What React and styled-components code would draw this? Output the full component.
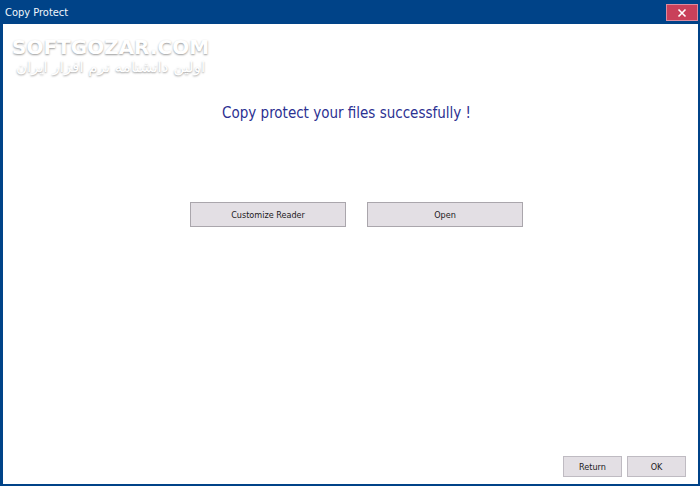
import React from "react";
import styled, { createGlobalStyle } from "styled-components";

const GlobalStyle = createGlobalStyle`
  *, *::before, *::after { box-sizing: border-box; }
  body { margin: 0; background: #004388; }
`;

const Window = styled.div`
  display: flex;
  flex-direction: column;
  min-height: 100vh;
  padding: 0 2px 2px 3px;
  background: #004388;
  color: #1c1a1c;
  font-family: "DejaVu Sans Condensed", "Noto Sans", sans-serif;
`;

const TitleBar = styled.header`
  display: flex;
  align-items: center;
  justify-content: space-between;
  height: 24px;
  padding: 1px 0 0 2px;
`;

const Title = styled.h1`
  margin: 0;
  color: #f2f6fc;
  font-size: 11px;
  font-weight: 400;
  line-height: 17px;
`;

const CloseButton = styled.button`
  display: flex;
  align-items: center;
  justify-content: center;
  width: 32px;
  height: 17px;
  padding: 0;
  border: 1px solid #dc8a9e;
  background: #c9405a;
  color: #fff;
`;

const Content = styled.main`
  display: flex;
  flex: 1;
  flex-direction: column;
  padding: 12px 12px 7px 9px;
  background: #fff;
`;

const Watermark = styled.div`
  display: flex;
  flex-direction: column;
  align-self: flex-start;
  align-items: center;
  color: #fff;
  font-family: "DejaVu Sans", sans-serif;
  text-shadow: 0 1px 2px #9c9c9c;
  white-space: nowrap;
`;

const SiteName = styled.span`
  font-size: 20px;
  font-weight: 700;
  line-height: 22px;
`;

const Tagline = styled.span`
  font-size: 15px;
  line-height: 18px;
`;

const Message = styled.h2`
  margin: 25px 0 0;
  padding-right: 5px;
  color: #2c3192;
  font-size: 15px;
  font-weight: 400;
  line-height: 24px;
  text-align: center;
`;

const Actions = styled.div`
  display: flex;
  justify-content: center;
  gap: 21px;
  margin-top: 77px;
  padding-left: 15px;
`;

const Footer = styled.footer`
  display: flex;
  justify-content: flex-end;
  gap: 5px;
  margin-top: auto;
`;

const Button = styled.button`
  width: ${(p) => (p.$wide ? "156px" : "59px")};
  height: ${(p) => (p.$wide ? "25px" : "21px")};
  padding: 0;
  border: 1px solid ${(p) => (p.$wide ? "#aaa6ac" : "#bfbbc2")};
  background: #e3dfe4;
  color: inherit;
  font-family: inherit;
  font-size: 9px;
  line-height: 16px;
`;

export default function App() {
  return (
    <Window>
      <GlobalStyle />
      <TitleBar>
        <Title>Copy Protect</Title>
        <CloseButton type="button" aria-label="Close">
          <svg width="10" height="10" viewBox="0 0 10 10" aria-hidden="true">
            <path d="M1.5 1.5 8.5 8.5M8.5 1.5 1.5 8.5" stroke="currentColor" strokeWidth="1.6" />
          </svg>
        </CloseButton>
      </TitleBar>
      <Content>
        <Watermark>
          <SiteName>SOFTGOZAR.COM</SiteName>
          <Tagline lang="fa" dir="rtl">اولین دانشنامه نرم افزار ایران</Tagline>
        </Watermark>
        <Message>Copy protect your files successfully !</Message>
        <Actions>
          <Button type="button" $wide>Customize Reader</Button>
          <Button type="button" $wide>Open</Button>
        </Actions>
        <Footer>
          <Button type="button">Return</Button>
          <Button type="button">OK</Button>
        </Footer>
      </Content>
    </Window>
  );
}
